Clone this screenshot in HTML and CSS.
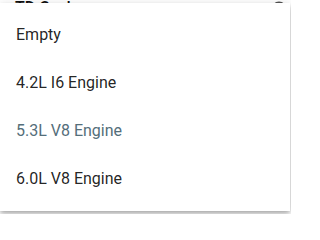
FILE: index.html
```html
<!DOCTYPE html>
<html>
<head>
<meta charset="utf-8">
<link rel="stylesheet" href="styles.css">
</head>
<body>
<div class="page">
  <div class="field">
    <span class="field-value">TD Cushman</span>
    <svg class="field-icon" viewBox="0 0 24 24" width="18" height="18"><path d="M12 2a10 10 0 1 0 0 20a10 10 0 0 0 0-20z" fill="#555"/></svg>
  </div>
  <div class="menu">
    <div class="item">Empty</div>
    <div class="item">4.2L I6 Engine</div>
    <div class="item selected">5.3L V8 Engine</div>
    <div class="item">6.0L V8 Engine</div>
  </div>
</div>
</body>
</html>
```
FILE: styles.css
```css
html, body {
  margin: 0;
  padding: 0;
  background: #fff;
}
body {
  font-family: Roboto, "Liberation Sans", sans-serif;
  width: 291px;
  height: 214px;
  overflow: hidden;
}
.page {
  position: relative;
  height: 214px;
  display: flow-root;
}
.field {
  display: flex;
  justify-content: space-between;
  align-items: flex-start;
  padding: 0 3px 0 15px;
  height: 18px;
  font-size: 16px;
  line-height: 12px;
  color: #111;
}
.field-value {
  font-weight: 500;
  padding-top: 2px;
}
.field-icon {
  margin-top: 0;
}
.menu {
  position: absolute;
  top: 3px;
  left: 0;
  width: 290px;
  padding: 8px 0;
  background: #fff;
  box-shadow: 0 2px 4px -1px rgba(0,0,0,.2), 0 4px 5px 0 rgba(0,0,0,.14), 0 1px 10px 0 rgba(0,0,0,.12);
}
.item {
  height: 48px;
  line-height: 48px;
  padding: 0 16px;
  font-size: 16px;
  color: rgba(0,0,0,.87);
}
.item.selected {
  color: #546e7a;
}
```
